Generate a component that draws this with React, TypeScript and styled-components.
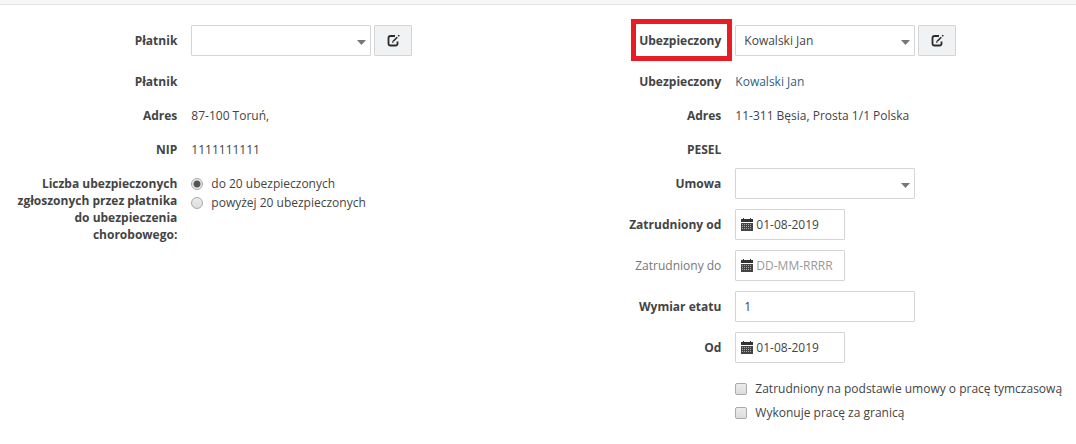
import React from 'react';
import styled, { createGlobalStyle, css } from 'styled-components';

const GlobalStyle = createGlobalStyle`
  *, *::before, *::after { box-sizing: border-box; }
  body {
    margin: 0;
    background: #fff;
    color: #444;
    font: 12px/17px 'Open Sans', sans-serif;
  }
  input, select, button { font: inherit; color: inherit; margin: 0; }
`;

const TopStrip = styled.header`
  height: 5px;
  background: #f6f6f6;
  border-bottom: 1px solid #e3e3e3;
`;

const Columns = styled.form`
  display: grid;
  grid-template-columns: 1fr 1fr;
  column-gap: 12px;
  padding: 20px 0;
`;

const Column = styled.section`
  display: flex;
  flex-direction: column;
  gap: 10px;
  min-width: 0;
`;

const Row = styled.div`
  display: grid;
  grid-template-columns: 1fr 2fr;
  align-items: start;
  & > * { min-width: 0; }
  & > :last-child { margin-left: 14px; }
`;

const labelCell = css<{ $optional?: boolean }>`
  padding: 7px 0 0 12px;
  text-align: right;
  font-weight: ${(p) => (p.$optional ? 400 : 700)};
  color: ${(p) => (p.$optional ? '#777' : '#444')};
`;

const FieldLabel = styled.label<{ $optional?: boolean }>`
  ${labelCell}
`;

const Term = styled.div<{ $optional?: boolean }>`
  ${labelCell}
`;

const Highlight = styled.span`
  position: relative;
  &::after {
    content: '';
    position: absolute;
    inset: -13px -11px -12px -8px;
    border: 5px solid #e81c24;
    pointer-events: none;
  }
`;

const Value = styled.div`
  padding-top: 7px;
  white-space: nowrap;
`;

const Link = styled.a`
  color: #2f5f85;
  text-decoration: none;
`;

const Controls = styled.div`
  display: flex;
  gap: 3px;
`;

const SelectWrap = styled.div`
  position: relative;
  width: 180px;
  svg {
    position: absolute;
    right: 5px;
    top: 15px;
    pointer-events: none;
  }
`;

const controlBox = css`
  height: 31px;
  border: 1px solid #d5d5d5;
  border-radius: 1px;
  background: #fff;
`;

const Select = styled.select`
  ${controlBox}
  appearance: none;
  width: 100%;
  padding: 0 20px 0 8px;
`;

const TextInput = styled.input`
  ${controlBox}
  width: 180px;
  padding: 0 8px;
`;

const DateBox = styled.div`
  ${controlBox}
  display: flex;
  align-items: center;
  gap: 3px;
  width: 110px;
  padding: 0 5px;
`;

const DateInput = styled.input`
  flex: 1;
  min-width: 0;
  padding: 0;
  border: 0;
  background: none;
  &::placeholder { color: #999; opacity: 1; }
`;

const IconButton = styled.button`
  ${controlBox}
  display: flex;
  align-items: center;
  justify-content: center;
  width: 38px;
  padding: 0;
  background: #f0f2f4;
`;

const Options = styled.div<{ $gap: number }>`
  display: flex;
  flex-direction: column;
  gap: ${(p) => p.$gap}px;
  padding-top: 7px;
`;

const Option = styled.label`
  display: flex;
  align-items: center;
  gap: 8px;
  white-space: nowrap;
`;

const tickBase = css`
  appearance: none;
  flex: none;
  width: 12px;
  height: 12px;
  border: 1px solid #aaa;
  background: linear-gradient(#ececec, #dcdcdc);
`;

const Radio = styled.input`
  ${tickBase}
  border-radius: 50%;
  &:checked {
    background: radial-gradient(circle, #555 0 3px, #e8e8e8 4px);
  }
`;

const Checkbox = styled.input`
  ${tickBase}
  border-radius: 2px;
`;

const Caret = () => (
  <svg width="9" height="5" viewBox="0 0 9 5" aria-hidden="true">
    <path d="M0 0H9L4.5 5Z" fill="#777" />
  </svg>
);

const EditIcon = () => (
  <svg width="13" height="13" viewBox="0 0 13 13" fill="none" stroke="#2b2b2b" aria-hidden="true">
    <path d="M8 2H3.6Q1.5 2 1.5 4V9.4Q1.5 11.5 3.6 11.5H8.4Q10.5 11.5 10.5 9.4V7.5" strokeWidth="1.8" />
    <path d="M6.2 7.3 10.3 3.2" strokeWidth="1.6" />
    <path d="M5 8.8 5.4 6.8 7 8.4Z" fill="#2b2b2b" stroke="none" />
    <path d="M11.2 2.3 12.3 1.2" strokeWidth="1.6" />
  </svg>
);

const CalendarIcon = () => (
  <svg width="12" height="13" viewBox="0 0 12 13" aria-hidden="true">
    <path d="M2 0H3V1H9V0H10V1H12V4H0V1H2Z" fill="#333" />
    <path d="M0 5H12V13H0Z" fill="#444" />
    <path d="M1 6.5H11M1 8.5H11M1 10.5H11" stroke="#aaa" strokeDasharray="1 1" />
  </svg>
);

const SelectField = ({ id, value = '' }: { id: string; value?: string }) => (
  <SelectWrap>
    <Select id={id} defaultValue={value}>
      <option value={value}>{value}</option>
    </Select>
    <Caret />
  </SelectWrap>
);

const EditButton = ({ label }: { label: string }) => (
  <IconButton type="button" aria-label={label}>
    <EditIcon />
  </IconButton>
);

interface DateRowProps {
  id: string;
  label: string;
  value?: string;
  optional?: boolean;
}

const DateRow = ({ id, label, value, optional }: DateRowProps) => (
  <Row>
    <FieldLabel htmlFor={id} $optional={optional}>{label}</FieldLabel>
    <DateBox>
      <CalendarIcon />
      <DateInput id={id} defaultValue={value} placeholder="DD-MM-RRRR" />
    </DateBox>
  </Row>
);

const InfoRow = ({ label, children }: { label: string; children?: React.ReactNode }) => (
  <Row>
    <Term>{label}</Term>
    <Value>{children}</Value>
  </Row>
);

export default function App() {
  return (
    <>
      <GlobalStyle />
      <TopStrip />
      <Columns>
        <Column>
          <Row>
            <FieldLabel htmlFor="platnik">Płatnik</FieldLabel>
            <Controls>
              <SelectField id="platnik" />
              <EditButton label="Edytuj płatnika" />
            </Controls>
          </Row>
          <InfoRow label="Płatnik" />
          <InfoRow label="Adres">87-100 Toruń,</InfoRow>
          <InfoRow label="NIP">1111111111</InfoRow>
          <Row role="radiogroup" aria-labelledby="liczba">
            <Term id="liczba">Liczba ubezpieczonych zgłoszonych przez płatnika do ubezpieczenia chorobowego:</Term>
            <Options $gap={2}>
              <Option>
                <Radio type="radio" name="liczba" defaultChecked />
                do 20 ubezpieczonych
              </Option>
              <Option>
                <Radio type="radio" name="liczba" />
                powyżej 20 ubezpieczonych
              </Option>
            </Options>
          </Row>
        </Column>
        <Column>
          <Row>
            <FieldLabel htmlFor="ubezpieczony"><Highlight>Ubezpieczony</Highlight></FieldLabel>
            <Controls>
              <SelectField id="ubezpieczony" value="Kowalski Jan" />
              <EditButton label="Edytuj ubezpieczonego" />
            </Controls>
          </Row>
          <InfoRow label="Ubezpieczony"><Link href="#kowalski-jan">Kowalski Jan</Link></InfoRow>
          <InfoRow label="Adres">11-311 Bęsia, Prosta 1/1 Polska</InfoRow>
          <InfoRow label="PESEL" />
          <Row>
            <FieldLabel htmlFor="umowa">Umowa</FieldLabel>
            <SelectField id="umowa" />
          </Row>
          <DateRow id="zatrudniony-od" label="Zatrudniony od" value="01-08-2019" />
          <DateRow id="zatrudniony-do" label="Zatrudniony do" optional />
          <Row>
            <FieldLabel htmlFor="wymiar">Wymiar etatu</FieldLabel>
            <TextInput id="wymiar" defaultValue="1" />
          </Row>
          <DateRow id="od" label="Od" value="01-08-2019" />
          <Row>
            <span />
            <Options $gap={7}>
              <Option>
                <Checkbox type="checkbox" />
                Zatrudniony na podstawie umowy o pracę tymczasową
              </Option>
              <Option>
                <Checkbox type="checkbox" />
                Wykonuje pracę za granicą
              </Option>
            </Options>
          </Row>
        </Column>
      </Columns>
    </>
  );
}
